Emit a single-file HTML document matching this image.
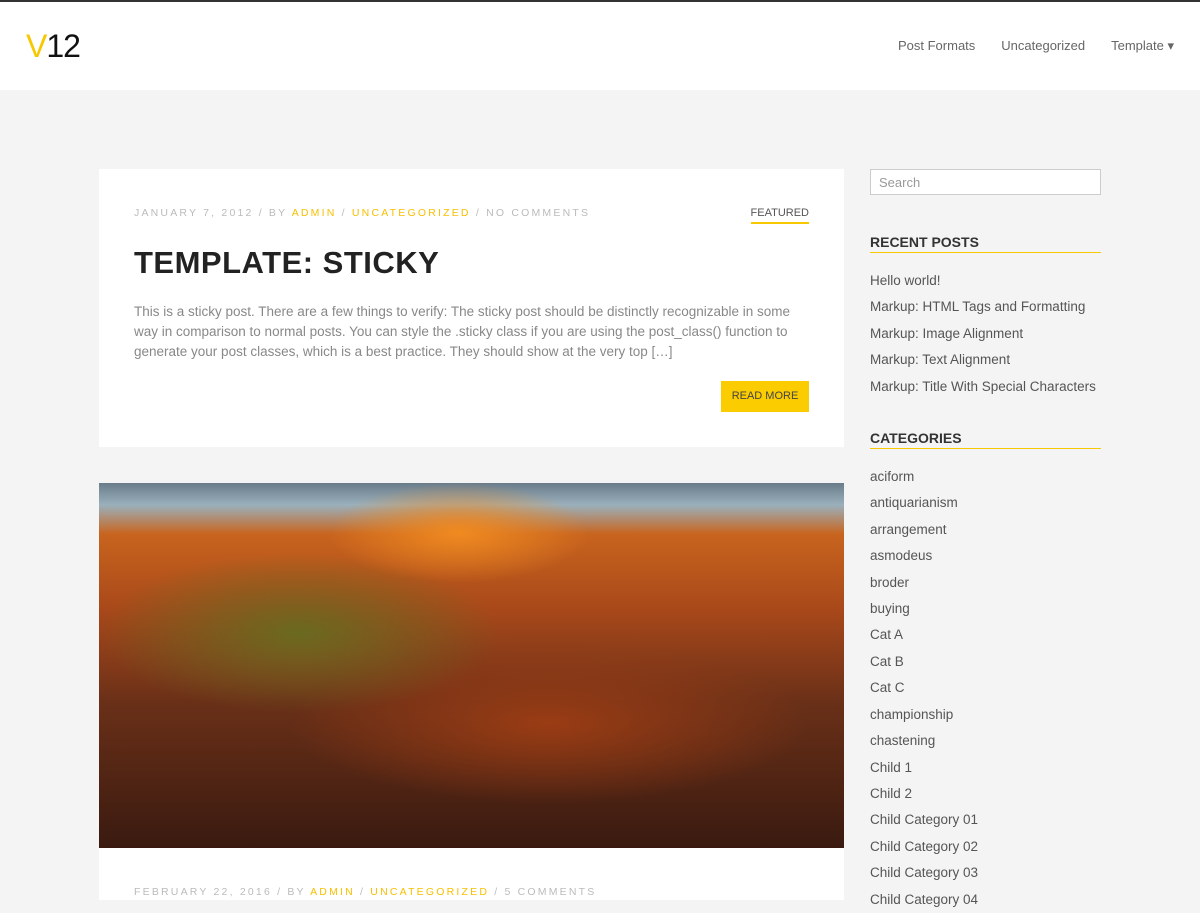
<!DOCTYPE html>
<html><head><meta charset="utf-8"><style>
*{margin:0;padding:0;box-sizing:border-box}
html,body{width:1200px;height:900px;overflow:hidden}
body{background:#f4f4f4;font-family:"Liberation Sans",sans-serif;color:#555}
.top{height:2px;background:#333}
header{height:88px;background:#fff;position:relative}
.logo{position:absolute;left:26px;top:26px;font-size:32px;line-height:36px;color:#111;letter-spacing:-1px}
.logo span{color:#f7c800}
nav{position:absolute;right:26px;top:36px;font-size:13px;color:#666}
nav a{margin-left:26px}
.card{position:absolute;left:99px;top:169px;width:745px;height:278px;background:#fff}
.meta{position:absolute;left:35px;top:38px;font-size:10.5px;letter-spacing:2.2px;color:#bbb}
.meta b{font-weight:normal;color:#f7c000}
.feat{position:absolute;right:35px;top:38px;font-size:11px;color:#555;border-bottom:2px solid #f7c800;padding-bottom:3px}
h1{position:absolute;left:35px;top:76px;font-size:31px;color:#222;letter-spacing:0.5px}
.ex{position:absolute;left:35px;top:133px;width:680px;font-size:13.5px;line-height:20px;color:#888}
.btn{position:absolute;right:35px;top:212px;width:88px;height:31px;background:#fbcd00;font-size:11px;color:#444;text-align:center;line-height:31px}
.img{position:absolute;left:99px;top:483px;width:745px;height:365px;background:
radial-gradient(ellipse 130px 50px at 360px 50px,#f08a20,transparent),
radial-gradient(ellipse 200px 80px at 200px 150px,#6a6a20,transparent),
radial-gradient(ellipse 260px 80px at 450px 240px,#9a3c14,transparent),
linear-gradient(180deg,#6a7c8a 0%,#9ab0bc 6%,#c8641e 14%,#a8481a 35%,#6a3018 60%,#3a1a10 100%)}
.card2{position:absolute;left:99px;top:848px;width:745px;height:52px;background:#fff}
.meta2{position:absolute;left:35px;top:38px;font-size:10.5px;letter-spacing:2.2px;color:#bbb}
.meta2 b{font-weight:normal;color:#f7c000}
.side{position:absolute;left:870px;top:169px;width:231px}
.search{height:26px;border:1px solid #ccc;background:#fff;font-size:13px;color:#999;padding:5px 8px}
h3{font-size:14px;color:#333;border-bottom:1px solid #f7c800;padding-bottom:2px;margin-top:39px;margin-bottom:15px}
.side li{list-style:none;font-size:13.5px;color:#555;line-height:26.4px}
</style></head><body>
<div class="top"></div>
<header><div class="logo"><span>V</span>12</div>
<nav><a>Post Formats</a><a>Uncategorized</a><a>Template ▾</a></nav></header>
<div class="card">
<div class="meta">JANUARY 7, 2012 / BY <b>ADMIN</b> / <b>UNCATEGORIZED</b> / NO COMMENTS</div>
<div class="feat">FEATURED</div>
<h1>TEMPLATE: STICKY</h1>
<div class="ex">This is a sticky post. There are a few things to verify: The sticky post should be distinctly recognizable in some way in comparison to normal posts. You can style the .sticky class if you are using the post_class() function to generate your post classes, which is a best practice. They should show at the very top […]</div>
<div class="btn">READ MORE</div>
</div>
<div class="img"></div>
<div class="card2"><div class="meta2">FEBRUARY 22, 2016 / BY <b>ADMIN</b> / <b>UNCATEGORIZED</b> / 5 COMMENTS</div></div>
<div class="side">
<div class="search">Search</div>
<h3>RECENT POSTS</h3>
<ul><li>Hello world!</li><li>Markup: HTML Tags and Formatting</li><li>Markup: Image Alignment</li><li>Markup: Text Alignment</li><li>Markup: Title With Special Characters</li></ul>
<h3 style="margin-top:30px">CATEGORIES</h3>
<ul><li>aciform</li><li>antiquarianism</li><li>arrangement</li><li>asmodeus</li><li>broder</li><li>buying</li><li>Cat A</li><li>Cat B</li><li>Cat C</li><li>championship</li><li>chastening</li><li>Child 1</li><li>Child 2</li><li>Child Category 01</li><li>Child Category 02</li><li>Child Category 03</li><li>Child Category 04</li></ul>
</div>
</body></html>
